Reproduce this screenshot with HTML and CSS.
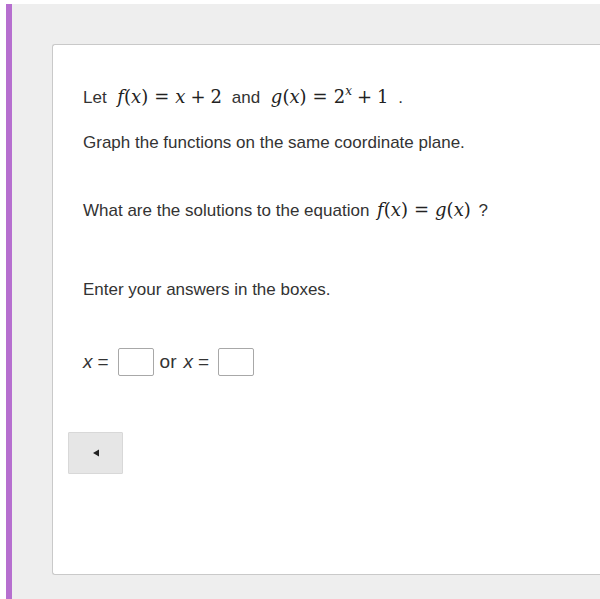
FILE: index.html
```html
<!DOCTYPE html>
<html>
<head>
<meta charset="utf-8">
<link rel="stylesheet" href="styles.css">
</head>
<body>
<div class="frame">
  <div class="card">
    <p class="line l1">Let <span class="m"><i>f</i>(<i>x</i>)<span class="rel">=</span><i>x</i><span class="bin">+</span>2</span> and <span class="m"><i>g</i>(<i>x</i>)<span class="rel">=</span>2<sup><i>x</i></sup><span class="bin">+</span>1</span> .</p>
    <p class="line l2">Graph the functions on the same coordinate plane.</p>
    <p class="line l3">What are the solutions to the equation <span class="m m3"><i>f</i>(<i>x</i>)<span class="rel">=</span><i>g</i>(<i>x</i>)</span> ?</p>
    <p class="line l4">Enter your answers in the boxes.</p>
    <div class="answers">
      <span class="var">x</span><span class="eq">=</span><span class="box"></span><span class="or">or</span><span class="var">x</span><span class="eq">=</span><span class="box"></span>
    </div>
    <button class="back"><svg width="8" height="8" viewBox="0 0 8 8"><path d="M7 0.5 L1 4 L7 7.5 Z" fill="#222"/></svg></button>
  </div>
</div>
</body>
</html>
```
FILE: styles.css
```css
html, body { margin: 0; padding: 0; background: #fff; }
body { width: 600px; height: 599px; overflow: hidden; font-family: "Liberation Sans", Arial, sans-serif; color: #333; }
.frame {
  margin-top: 4px;
  margin-left: 6px;
  border-left: 6px solid #b66fcf;
  background: #eeeeee;
  height: 595px;
  padding: 40px 0 0 40px;
  box-sizing: border-box;
}
.card {
  background: #fff;
  border: 1px solid #c9c9c9;
  border-right: none;
  border-radius: 3px 0 0 3px;
  height: 531px;
  box-sizing: border-box;
  padding: 40px 0 0 30px;
}
.line { margin: 0; font-size: 17px; line-height: 24px; }
.l2 { margin-top: 21px; }
.l3 { margin-top: 43px; }
.l4 { margin-top: 55px; }
.m { font-family: "DejaVu Serif", "Liberation Serif", serif; font-size: 18px; padding: 0 5px 0 6px; color: #222; }
.m3 { padding: 0 3px 0 3px; }
.m i { font-style: italic; }
.rel { margin: 0 6px; }
.bin { margin: 0 5px; }
.m sup { font-size: 12px; vertical-align: 8px; line-height: 0; }
.answers { display: flex; align-items: center; margin-top: 46px; font-size: 19px; color: #333; height: 28px; }
.var { font-style: italic; margin-right: 5px; }
.eq { margin-right: 9px; }
.or { margin: 0 7px 0 6px; }
.box { width: 36px; height: 28px; border: 1px solid #a8a8a8; border-radius: 2px; box-sizing: border-box; display: inline-block; }
.back {
  display: flex; align-items: center; justify-content: center;
  margin: 56px 0 0 -15px;
  width: 55px; height: 42px;
  background: #e6e6e6;
  border: 1px solid #d8d8d8;
  border-radius: 1px;
  padding: 0;
}
```
